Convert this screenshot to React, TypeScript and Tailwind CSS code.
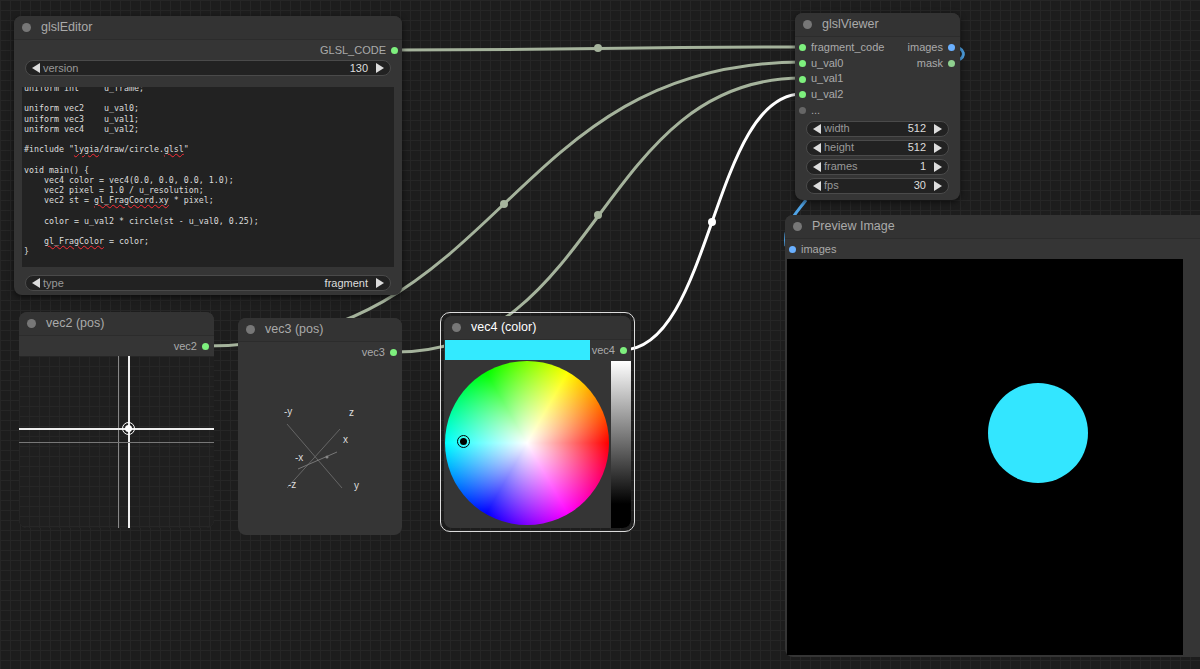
const sans = "font-[Liberation_Sans]";

function Dot({ c = "bg-[#7ef07e]" }: { c?: string }) {
  return <span className={`inline-block h-[7px] w-[7px] rounded-full ${c}`} />;
}

function Widget({ label, value, w }: { label: string; value: string; w: string }) {
  return (
    <div className={`flex h-[16px] ${w} items-center rounded-full border border-[#4a4a4a] bg-[#222] px-[6px] text-[11px]`}>
      <span className="h-0 w-0 border-y-[5px] border-r-[8px] border-y-transparent border-r-[#ddd]" />
      <span className="ml-[3px] text-[#999]">{label}</span>
      <span className="ml-auto mr-[8px] text-[#ddd]">{value}</span>
      <span className="h-0 w-0 border-y-[5px] border-l-[8px] border-y-transparent border-l-[#ddd]" />
    </div>
  );
}

function Title({ text, bright = false }: { text: string; bright?: boolean }) {
  return (
    <div className="flex h-[24px] items-center gap-[10px] rounded-t-[8px] border-b border-[#2c2c2c] bg-[#333] px-[8px]">
      <span className="h-[9px] w-[9px] rounded-full bg-[#777]" />
      <span className={`text-[12.5px] ${bright ? "text-white" : "text-[#aaa]"}`}>{text}</span>
    </div>
  );
}

const W = ({ children }: { children: React.ReactNode }) => (
  <span className="underline decoration-wavy decoration-red-500 decoration-[1px]">{children}</span>
);

function wire(x1: number, y1: number, x2: number, y2: number) {
  const d = Math.max(60, (x2 - x1) * 0.5);
  return `M${x1} ${y1} C${x1 + d} ${y1}, ${x2 - d} ${y2}, ${x2} ${y2}`;
}

export default function App() {
  return (
    <div className={`relative h-[669px] w-[1200px] overflow-hidden bg-[#1d1d1d] bg-[linear-gradient(to_right,#262626_1px,transparent_1px),linear-gradient(to_bottom,#262626_1px,transparent_1px)] bg-[size:10px_10px] ${sans}`}>
      {/* wires (behind nodes) */}
      <svg className="pointer-events-none absolute inset-0" width="1200" height="669">
        <g fill="none" strokeWidth="3">
          <path d={wire(396, 50, 802, 47)} stroke="#a5b39c" />
          <path d={wire(206, 346, 802, 62)} stroke="#a5b39c" />
          <path d={wire(396, 352, 802, 78)} stroke="#a5b39c" />
          <path d={wire(622, 350, 802, 94)} stroke="#ffffff" />
          <path d="M952 47 C966 47, 966 58, 958 60" stroke="#4fa3e6" />
          <path d="M806 200 C795 215, 783 225, 786 246" stroke="#4fa3e6" />
        </g>
        <circle cx="598" cy="48" r="4" fill="#a5b39c" />
        <circle cx="504" cy="204" r="4" fill="#a5b39c" />
        <circle cx="598" cy="215" r="4" fill="#a5b39c" />
        <circle cx="712" cy="222" r="4" fill="#fff" />
      </svg>

      {/* glslEditor */}
      <div className="absolute left-[14px] top-[16px] h-[279px] w-[388px] rounded-[8px] bg-[#353535] shadow-[0_2px_6px_rgba(0,0,0,0.6)]">
        <Title text="glslEditor" />
        <div className="flex h-[20px] items-center justify-end gap-[5px] pr-[4px] text-[11px] text-[#aaa]">
          GLSL_CODE <Dot />
        </div>
        <div className="px-[11px]">
          <Widget label="version" value="130" w="w-full" />
        </div>
        <div className="mx-[8px] mt-[11px] h-[180px] overflow-hidden bg-[#222] px-[2px] font-[DejaVu_Sans_Mono] text-[8.3px] leading-[10.2px] whitespace-pre text-[#ddd]">
          <div className="-mt-[4px]">{"uniform int     u_frame;"}</div>
          <div>{" "}</div>
          <div>{"uniform vec2    u_val0;"}</div>
          <div>{"uniform vec3    u_val1;"}</div>
          <div>{"uniform vec4    u_val2;"}</div>
          <div>{" "}</div>
          <div>#include "<W>lygia</W>/draw/circle.<W>glsl</W>"</div>
          <div>{" "}</div>
          <div>{"void main() {"}</div>
          <div>{"    vec4 color = vec4(0.0, 0.0, 0.0, 1.0);"}</div>
          <div>{"    vec2 pixel = 1.0 / u_resolution;"}</div>
          <div>{"    vec2 st = "}<W>gl_FragCoord.xy</W>{" * pixel;"}</div>
          <div>{" "}</div>
          <div>{"    color = u_val2 * circle(st - u_val0, 0.25);"}</div>
          <div>{" "}</div>
          <div>{"    "}<W>gl_FragColor</W>{" = color;"}</div>
          <div>{"}"}</div>
        </div>
        <div className="mt-[8px] px-[11px]">
          <Widget label="type" value="fragment" w="w-full" />
        </div>
      </div>

      {/* glslViewer */}
      <div className="absolute left-[795px] top-[13px] h-[187px] w-[165px] rounded-[8px] bg-[#353535] shadow-[0_2px_6px_rgba(0,0,0,0.6)]">
        <Title text="glslViewer" />
        <div className="relative mt-[3px] text-[11px] leading-[15.7px] text-[#aaa]">
          {["fragment_code", "u_val0", "u_val1", "u_val2"].map((n) => (
            <div key={n} className="flex items-center gap-[5px] pl-[4px]">
              <Dot /> {n}
            </div>
          ))}
          <div className="flex items-center gap-[5px] pl-[4px]">
            <Dot c="bg-[#666]" /> ...
          </div>
          <div className="absolute right-[5px] top-0 flex flex-col items-end">
            <div className="flex items-center gap-[5px]">images <Dot c="bg-[#6ab0ff]" /></div>
            <div className="flex items-center gap-[5px]">mask <Dot c="bg-[#8fd08f]" /></div>
          </div>
        </div>
        <div className="mt-[2px] flex flex-col gap-[3px] px-[11px]">
          <Widget label="width" value="512" w="w-full" />
          <Widget label="height" value="512" w="w-full" />
          <Widget label="frames" value="1" w="w-full" />
          <Widget label="fps" value="30" w="w-full" />
        </div>
      </div>

      {/* Preview Image */}
      <div className="absolute left-[785px] top-[215px] h-[442px] w-[430px] rounded-[8px] bg-[#353535]">
        <Title text="Preview Image" />
        <div className="flex h-[20px] items-center gap-[5px] pl-[4px] text-[11px] text-[#aaa]">
          <Dot c="bg-[#6ab0ff]" /> images
        </div>
        <div className="relative ml-[2px] h-[396px] w-[396px] bg-black">
          <div className="absolute left-[201px] top-[124px] h-[100px] w-[100px] rounded-full bg-[#33e6ff]" />
        </div>
      </div>

      {/* vec2 */}
      <div className="absolute left-[19px] top-[312px] h-[216px] w-[195px] overflow-hidden rounded-[8px] bg-[#353535]">
        <Title text="vec2 (pos)" />
        <div className="flex h-[20px] items-center justify-end gap-[5px] pr-[5px] text-[11px] text-[#aaa]">
          vec2 <Dot />
        </div>
        <div className="relative h-[172px] bg-[#1f1f1f] bg-[linear-gradient(to_right,#262626_1px,transparent_1px),linear-gradient(to_bottom,#262626_1px,transparent_1px)] bg-[size:10px_10px]">
          <div className="absolute left-[99px] top-0 h-full w-px bg-[#888]" />
          <div className="absolute left-[109px] top-0 h-full w-[1.5px] bg-[#eee]" />
          <div className="absolute left-0 top-[72px] h-[1.5px] w-full bg-[#eee]" />
          <div className="absolute left-0 top-[86px] h-px w-full bg-[#777]" />
          <div className="absolute left-[103px] top-[66px] flex h-[13px] w-[13px] items-center justify-center rounded-full border border-white">
            <div className="h-[7px] w-[7px] rounded-full bg-white" />
          </div>
        </div>
      </div>

      {/* vec3 */}
      <div className="absolute left-[238px] top-[318px] h-[217px] w-[164px] rounded-[8px] bg-[#353535]">
        <Title text="vec3 (pos)" />
        <div className="flex h-[20px] items-center justify-end gap-[5px] pr-[5px] text-[11px] text-[#aaa]">
          vec3 <Dot />
        </div>
        <div className="relative h-[160px] text-[10px] text-[#ddd]">
          <svg className="absolute inset-0" width="164" height="160">
            <line x1="49" y1="62" x2="104" y2="126" stroke="#666" />
            <line x1="49" y1="126" x2="102" y2="67" stroke="#666" />
            <line x1="60" y1="107" x2="99" y2="90" stroke="#777" />
            <circle cx="89" cy="95" r="1.5" fill="#888" />
          </svg>
          <span className="absolute left-[46px] top-[42px]">-y</span>
          <span className="absolute left-[111px] top-[43px]">z</span>
          <span className="absolute left-[105px] top-[70px]">x</span>
          <span className="absolute left-[57px] top-[88px]">-x</span>
          <span className="absolute left-[50px] top-[115px]">-z</span>
          <span className="absolute left-[116px] top-[116px]">y</span>
        </div>
      </div>

      {/* vec4 */}
      <div className="absolute left-[440px] top-[312px] h-[220px] w-[195px] rounded-[10px] border-[1.5px] border-[#ddd] p-[3px]">
        <div className="h-full w-full overflow-hidden rounded-[8px] bg-[#353535]">
          <Title text="vec4 (color)" bright />
          <div className="flex items-start">
            <div className="ml-[1px] w-[145px]">
              <div className="h-[20px] bg-[#33eaff]" />
              <div className="relative mt-[1px] h-[164px] w-[164px] rounded-full bg-[conic-gradient(#80ff00,#ffff00,#ff8000,#ff0000,#ff0080,#ff00ff,#8000ff,#0000ff,#0080ff,#00ffff,#00ff80,#00ff00,#80ff00)]">
                <div className="absolute inset-0 rounded-full bg-[radial-gradient(circle,#fff_0%,rgba(255,255,255,0)_70%)]" />
                <div className="absolute left-[12px] top-[74px] flex h-[13px] w-[13px] items-center justify-center rounded-full border border-black">
                  <div className="h-[7px] w-[7px] rounded-full bg-black" />
                </div>
              </div>
            </div>
            <div className="ml-auto flex flex-col items-end">
              <div className="flex h-[20px] items-center gap-[5px] pr-[4px] text-[11px] text-[#aaa]">
                vec4 <Dot />
              </div>
              <div className="mr-0 mt-[1px] h-[168px] w-[20px] bg-[linear-gradient(to_bottom,#fff,#000_85%)]" />
            </div>
          </div>
        </div>
      </div>
    </div>
  );
}
